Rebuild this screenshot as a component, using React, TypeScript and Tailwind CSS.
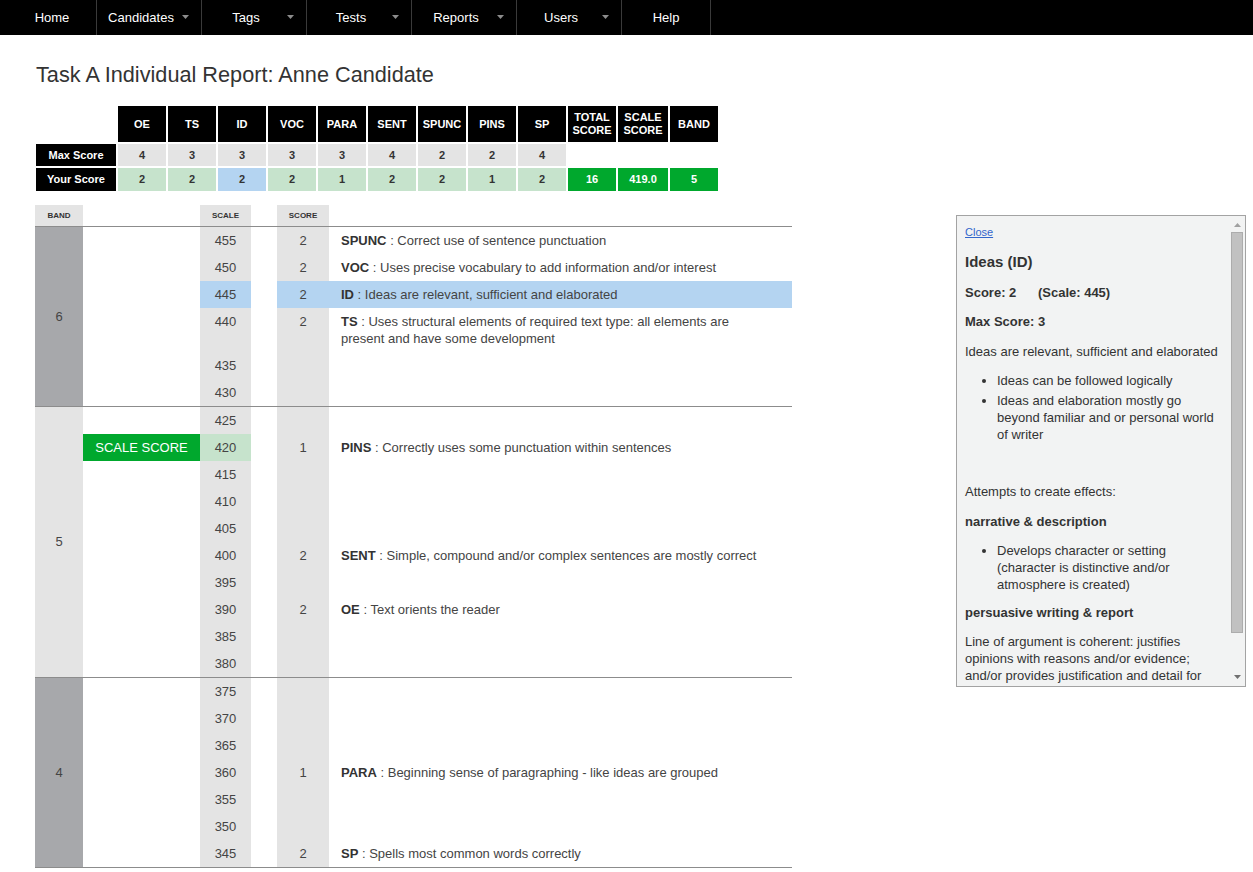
import React from "react";

type Row = {
  scale: number;
  score?: number;
  code?: string;
  text?: string;
  highlight?: boolean;
  mine?: boolean;
};

const navItems = [
  { label: "Home", width: "w-[97px] pl-2", arrow: false },
  { label: "Candidates", width: "w-[105px] pr-[16px]", arrow: true },
  { label: "Tags", width: "w-[105px] pr-[16px]", arrow: true },
  { label: "Tests", width: "w-[105px] pr-[16px]", arrow: true },
  { label: "Reports", width: "w-[105px] pr-[16px]", arrow: true },
  { label: "Users", width: "w-[105px] pr-[16px]", arrow: true },
  { label: "Help", width: "w-[89px]", arrow: false },
];

const criteria = ["OE", "TS", "ID", "VOC", "PARA", "SENT", "SPUNC", "PINS", "SP"];
const maxScores = [4, 3, 3, 3, 3, 4, 2, 2, 4];
const yourScores = [2, 2, 2, 2, 1, 2, 2, 1, 2];

const bands: { band: number; mine: boolean; rows: Row[] }[] = [
  {
    band: 6,
    mine: false,
    rows: [
      { scale: 455, score: 2, code: "SPUNC", text: "Correct use of sentence punctuation" },
      { scale: 450, score: 2, code: "VOC", text: "Uses precise vocabulary to add information and/or interest" },
      { scale: 445, score: 2, code: "ID", text: "Ideas are relevant, sufficient and elaborated", highlight: true },
      {
        scale: 440,
        score: 2,
        code: "TS",
        text: "Uses structural elements of required text type: all elements are present and have some development",
      },
      { scale: 435 },
      { scale: 430 },
    ],
  },
  {
    band: 5,
    mine: true,
    rows: [
      { scale: 425 },
      { scale: 420, score: 1, code: "PINS", text: "Correctly uses some punctuation within sentences", mine: true },
      { scale: 415 },
      { scale: 410 },
      { scale: 405 },
      { scale: 400, score: 2, code: "SENT", text: "Simple, compound and/or complex sentences are mostly correct" },
      { scale: 395 },
      { scale: 390, score: 2, code: "OE", text: "Text orients the reader" },
      { scale: 385 },
      { scale: 380 },
    ],
  },
  {
    band: 4,
    mine: false,
    rows: [
      { scale: 375 },
      { scale: 370 },
      { scale: 365 },
      { scale: 360, score: 1, code: "PARA", text: "Beginning sense of paragraphing - like ideas are grouped" },
      { scale: 355 },
      { scale: 350 },
      { scale: 345, score: 2, code: "SP", text: "Spells most common words correctly" },
    ],
  },
];

function NavArrow() {
  return (
    <svg className="absolute right-[12px] top-[15px]" width="7" height="4" viewBox="0 0 7 4">
      <polygon points="0,0 7,0 3.5,4" fill="#8c8c8c" />
    </svg>
  );
}

function ScoreTable() {
  return (
    <div className="grid grid-cols-[80px_repeat(10,48px)_50px_48px] grid-rows-[36px_22px_23px] gap-[2px] text-[11px] font-bold">
      <div />
      {criteria.map((c) => (
        <div key={c} className="bg-black text-white flex items-center justify-center">
          {c}
        </div>
      ))}
      <div className="bg-black text-white flex items-center justify-center text-center leading-[13px]">
        TOTAL
        <br />
        SCORE
      </div>
      <div className="bg-black text-white flex items-center justify-center text-center leading-[13px]">
        SCALE
        <br />
        SCORE
      </div>
      <div className="bg-black text-white flex items-center justify-center">BAND</div>

      <div className="bg-black text-white flex items-center justify-center">Max Score</div>
      {maxScores.map((m, i) => (
        <div key={i} className="bg-[#e4e4e4] text-[#333] flex items-center justify-center">
          {m}
        </div>
      ))}
      <div />
      <div />
      <div />

      <div className="bg-black text-white flex items-center justify-center">Your Score</div>
      {yourScores.map((s, i) => (
        <div
          key={i}
          className={
            criteria[i] === "ID"
              ? "bg-[#b4d4f1] text-[#333] flex items-center justify-center"
              : "bg-[#c6e3cc] text-[#333] flex items-center justify-center"
          }
        >
          {s}
        </div>
      ))}
      <div className="bg-[#00a82d] text-white flex items-center justify-center">16</div>
      <div className="bg-[#00a82d] text-white flex items-center justify-center">419.0</div>
      <div className="bg-[#00a82d] text-white flex items-center justify-center">5</div>
    </div>
  );
}

function BandRow({ row }: { row: Row }) {
  const scaleBg = row.highlight ? "bg-[#b4d4f1]" : row.mine ? "bg-[#c6e3cc]" : "bg-[#e4e4e4]";
  const scoreBg = row.highlight ? "bg-[#b4d4f1]" : "bg-[#e4e4e4]";
  const descBg = row.highlight ? "bg-[#b4d4f1]" : "bg-white";
  return (
    <div className="grid grid-cols-[117px_51px_26px_52px_1fr] text-[13px] leading-[17px] text-[#444]">
      <div className="flex">
        {row.mine && (
          <div className="w-full bg-[#00a82d] text-white text-[13px] flex items-center justify-center">
            SCALE SCORE
          </div>
        )}
      </div>
      <div className={`${scaleBg} py-[5px] text-center`}>{row.scale}</div>
      <div />
      <div className={`${scoreBg} py-[5px] text-center`}>{row.score}</div>
      <div className={`${descBg} py-[5px] pl-[12px] pr-[20px]`}>
        {row.code && (
          <>
            <span className="font-bold text-[#333]">{row.code}</span> : {row.text}
          </>
        )}
      </div>
    </div>
  );
}

function BandTable() {
  return (
    <div className="mt-[14px] w-[757px] -ml-px">
      <div className="grid grid-cols-[48px_117px_51px_26px_52px_1fr] h-[22px] border-b border-[#8c8c8c] text-[8px] font-bold text-[#333]">
        <div className="bg-[#e4e4e4] flex items-center justify-center">BAND</div>
        <div />
        <div className="bg-[#e4e4e4] flex items-center justify-center">SCALE</div>
        <div />
        <div className="bg-[#e4e4e4] flex items-center justify-center">SCORE</div>
        <div />
      </div>
      {bands.map((b) => (
        <div key={b.band} className="flex border-b border-[#8c8c8c]">
          <div
            className={
              b.mine
                ? "w-[48px] bg-[#e4e4e4] flex items-center justify-center text-[13px] text-[#444]"
                : "w-[48px] bg-[#a7a8ab] flex items-center justify-center text-[13px] text-[#444]"
            }
          >
            {b.band}
          </div>
          <div className="flex-1 flex flex-col">
            {b.rows.map((r) => (
              <BandRow key={r.scale} row={r} />
            ))}
          </div>
        </div>
      ))}
    </div>
  );
}

function DetailPanel() {
  return (
    <div className="ml-[163px] mt-[180px] w-[290px] h-[472px] border border-[#a3a3a3] bg-[#f2f3f3] flex text-[#333]">
      <div className="flex-1 overflow-hidden pl-[8px] pr-[8px] pt-[10px] text-[13px] leading-[17px]">
        <a href="#" className="block text-[11px] leading-[13px] text-[#3366cc] underline">
          Close
        </a>
        <div className="mt-[14px] text-[15px] leading-[18px] font-bold">Ideas (ID)</div>
        <div className="mt-[13px] text-[13px] font-bold">
          Score: 2 <span className="ml-[18px]">(Scale: 445)</span>
        </div>
        <div className="mt-[12px] text-[13px] font-bold">Max Score: 3</div>
        <p className="mt-[13px]">Ideas are relevant, sufficient and elaborated</p>
        <ul className="mt-[12px] list-disc pl-[32px] space-y-[3px]">
          <li>Ideas can be followed logically</li>
          <li>Ideas and elaboration mostly go beyond familiar and or personal world of writer</li>
        </ul>
        <p className="mt-[40px]">Attempts to create effects:</p>
        <div className="mt-[13px] text-[13px] font-bold">narrative &amp; description</div>
        <ul className="mt-[12px] list-disc pl-[32px]">
          <li>Develops character or setting (character is distinctive and/or atmosphere is created)</li>
        </ul>
        <div className="mt-[11px] text-[13px] font-bold">persuasive writing &amp; report</div>
        <p className="mt-[12px]">
          Line of argument is coherent: justifies opinions with reasons and/or evidence; and/or provides
          justification and detail for some points
        </p>
      </div>
      <div className="w-[16px] flex flex-col items-center">
        <svg className="mt-[7px]" width="7" height="4" viewBox="0 0 7 4">
          <polygon points="3.5,0 7,4 0,4" fill="#a0a0a0" />
        </svg>
        <div className="mt-[5px] w-[12px] h-[401px] bg-[#c1c1c1] border border-[#acacac]" />
        <div className="flex-1" />
        <svg className="mb-[7px]" width="7" height="4" viewBox="0 0 7 4">
          <polygon points="0,0 7,0 3.5,4" fill="#707070" />
        </svg>
      </div>
    </div>
  );
}

export default function App() {
  return (
    <div className="min-h-[872px] bg-white font-['Liberation_Sans',Arial,sans-serif]">
      <nav className="h-[35px] bg-black flex">
        {navItems.map((item) => (
          <div
            key={item.label}
            className={`${item.width} relative flex items-center justify-center border-r border-[#3a3a3a] text-white text-[13px]`}
          >
            {item.label}
            {item.arrow && <NavArrow />}
          </div>
        ))}
      </nav>
      <div className="flex pl-[36px]">
        <div className="w-[757px]">
          <h1 className="mt-[28px] text-[21.7px] leading-[24px] text-[#333]">
            Task A Individual Report: Anne Candidate
          </h1>
          <div className="mt-[19px]">
            <ScoreTable />
          </div>
          <BandTable />
        </div>
        <DetailPanel />
      </div>
    </div>
  );
}
